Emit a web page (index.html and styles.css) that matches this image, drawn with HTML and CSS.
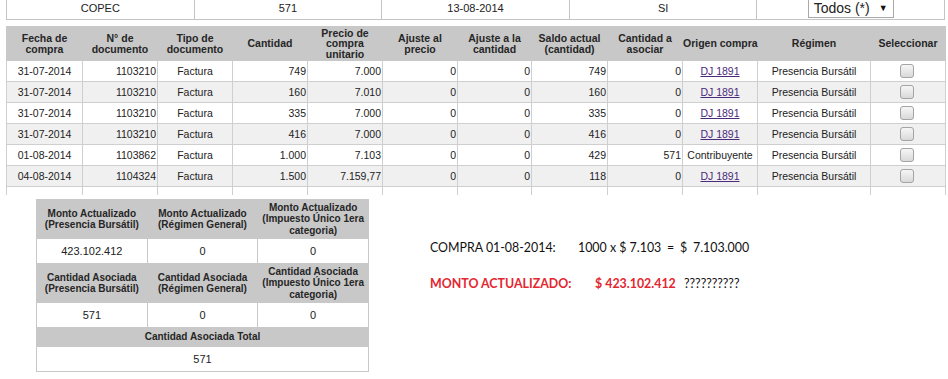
FILE: index.html
```html
<!DOCTYPE html>
<html lang="es">
<head>
<meta charset="utf-8">
<title>Compras</title>
<link rel="stylesheet" href="styles.css">
</head>
<body>
<div class="page">
  <table class="top">
    <tr>
      <td>COPEC</td>
      <td>571</td>
      <td>13-08-2014</td>
      <td>SI</td>
      <td><div class="sel"><span>Todos (*)</span><span class="arr">▼</span></div></td>
    </tr>
  </table>

  <table class="grid">
    <colgroup>
      <col class="c76"><col class="c75"><col class="c75"><col class="c75"><col class="c75"><col class="c75"><col class="c74"><col class="c76"><col class="c75"><col class="c75"><col class="c113"><col class="c75">
    </colgroup>
    <thead>
      <tr>
        <th>Fecha de<br>compra</th>
        <th>N° de<br>documento</th>
        <th>Tipo de<br>documento</th>
        <th>Cantidad</th>
        <th>Precio de<br>compra<br>unitario</th>
        <th>Ajuste al<br>precio</th>
        <th>Ajuste a la<br>cantidad</th>
        <th>Saldo actual<br>(cantidad)</th>
        <th>Cantidad a<br>asociar</th>
        <th class="nw">Origen compra</th>
        <th>Régimen</th>
        <th>Seleccionar</th>
      </tr>
    </thead>
    <tbody>
      <tr>
        <td class="c">31-07-2014</td><td class="r">1103210</td><td class="c">Factura</td><td class="r">749</td><td class="r">7.000</td><td class="r">0</td><td class="r">0</td><td class="r">749</td><td class="r">0</td><td class="c"><a class="lnk" href="#">DJ 1891</a></td><td class="c">Presencia Bursátil</td><td class="c"><span class="chk"></span></td>
      </tr>
      <tr class="alt">
        <td class="c">31-07-2014</td><td class="r">1103210</td><td class="c">Factura</td><td class="r">160</td><td class="r">7.010</td><td class="r">0</td><td class="r">0</td><td class="r">160</td><td class="r">0</td><td class="c"><a class="lnk" href="#">DJ 1891</a></td><td class="c">Presencia Bursátil</td><td class="c"><span class="chk"></span></td>
      </tr>
      <tr>
        <td class="c">31-07-2014</td><td class="r">1103210</td><td class="c">Factura</td><td class="r">335</td><td class="r">7.000</td><td class="r">0</td><td class="r">0</td><td class="r">335</td><td class="r">0</td><td class="c"><a class="lnk" href="#">DJ 1891</a></td><td class="c">Presencia Bursátil</td><td class="c"><span class="chk"></span></td>
      </tr>
      <tr class="alt">
        <td class="c">31-07-2014</td><td class="r">1103210</td><td class="c">Factura</td><td class="r">416</td><td class="r">7.000</td><td class="r">0</td><td class="r">0</td><td class="r">416</td><td class="r">0</td><td class="c"><a class="lnk" href="#">DJ 1891</a></td><td class="c">Presencia Bursátil</td><td class="c"><span class="chk"></span></td>
      </tr>
      <tr>
        <td class="c">01-08-2014</td><td class="r">1103862</td><td class="c">Factura</td><td class="r">1.000</td><td class="r">7.103</td><td class="r">0</td><td class="r">0</td><td class="r">429</td><td class="r">571</td><td class="c">Contribuyente</td><td class="c">Presencia Bursátil</td><td class="c"><span class="chk"></span></td>
      </tr>
      <tr class="alt">
        <td class="c">04-08-2014</td><td class="r">1104324</td><td class="c">Factura</td><td class="r">1.500</td><td class="r">7.159,77</td><td class="r">0</td><td class="r">0</td><td class="r">118</td><td class="r">0</td><td class="c"><a class="lnk" href="#">DJ 1891</a></td><td class="c">Presencia Bursátil</td><td class="c"><span class="chk"></span></td>
      </tr>
      <tr class="empty">
        <td></td><td></td><td></td><td></td><td></td><td></td><td></td><td></td><td></td><td></td><td></td><td></td>
      </tr>
    </tbody>
  </table>

  <div class="bottom">
    <table class="sum">
      <tr class="h3">
        <th>Monto Actualizado<br>(Presencia Bursátil)</th>
        <th>Monto Actualizado<br>(Régimen General)</th>
        <th>Monto Actualizado<br>(Impuesto Único 1era<br>categoria)</th>
      </tr>
      <tr class="v">
        <td>423.102.412</td><td>0</td><td>0</td>
      </tr>
      <tr class="h3">
        <th>Cantidad Asociada<br>(Presencia Bursátil)</th>
        <th>Cantidad Asociada<br>(Régimen General)</th>
        <th>Cantidad Asociada<br>(Impuesto Único 1era<br>categoria)</th>
      </tr>
      <tr class="v">
        <td>571</td><td>0</td><td>0</td>
      </tr>
      <tr class="h1">
        <th colspan="3">Cantidad Asociada Total</th>
      </tr>
      <tr class="v">
        <td colspan="3">571</td>
      </tr>
    </table>

    <div class="note">
      <div class="line">
        <span class="w1">COMPRA 01-08-2014:</span><span class="w2">1000 x $ 7.103</span><span class="w3">=</span><span class="w3">$</span><span>7.103.000</span>
      </div>
      <div class="line red">
        <span class="w4">MONTO ACTUALIZADO:</span><span class="w5">$ 423.102.412</span><span class="q">??????????</span>
      </div>
    </div>
  </div>
</div>
</body>
</html>
```

FILE: styles.css
```css
html, body {
  margin: 0;
  padding: 0;
  background: #ffffff;
}

body {
  font-family: "Liberation Sans", Arial, sans-serif;
  color: #222222;
  overflow: hidden;
}

.page {
  padding: 0 3px 0 6px;
}

/* top summary row */
.top {
  border-collapse: collapse;
  table-layout: fixed;
  width: 939px;
  margin-top: -4px;
}

.top td {
  border: 1px solid #c4c4c4;
  height: 22px;
  padding: 0;
  text-align: center;
  vertical-align: middle;
  font-size: 11px;
  color: #222;
}

.sel {
  display: inline-flex;
  align-items: center;
  gap: 9px;
  height: 19px;
  margin-top: -1px;
  padding: 0 5px 0 5px;
  border: 1px solid #a9a9a9;
  border-top-color: #c0c0c0;
  background: #fff;
  font-size: 14px;
  color: #222;
}

.sel .arr {
  font-size: 9px;
  color: #111;
}

/* main grid */
.grid {
  border-collapse: collapse;
  table-layout: fixed;
  width: 939px;
  margin-top: 6px;
}

.c74 { width: 74px; }
.c75 { width: 75px; }
.c76 { width: 76px; }
.c113 { width: 113px; }

.grid th {
  background: #c8c8c8;
  border: 1px solid #c8c8c8;
  height: 33px;
  padding: 0 2px;
  font-size: 10.5px;
  line-height: 10.5px;
  font-weight: bold;
  color: #262626;
  text-align: center;
  vertical-align: middle;
}

.grid th.nw {
  white-space: nowrap;
  padding: 0;
}

.grid td {
  border: 1px solid #cfcfcf;
  height: 20px;
  padding: 0 2px 0 2px;
  font-size: 10.5px;
  color: #222;
  vertical-align: middle;
  white-space: nowrap;
}

.grid td.r { text-align: right; padding-right: 1px; }
.grid td.c { text-align: center; }

.grid tr.alt td { background: #f0f0f0; }

.grid tr.empty td {
  height: 8px;
  border-bottom: none;
}

.lnk {
  color: #4a2a7a;
  text-decoration: underline;
}

.chk {
  display: inline-block;
  width: 12px;
  height: 12px;
  border: 1px solid #a4a4a4;
  border-radius: 3px;
  background: linear-gradient(#f6f6f6, #d9d9d9);
  vertical-align: middle;
  margin-top: -2px;
  margin-left: -3px;
}

/* bottom */
.bottom {
  display: flex;
  align-items: flex-start;
  margin-top: 4px;
}

.sum {
  border-collapse: collapse;
  table-layout: fixed;
  width: 333px;
  margin-left: 30px;
}

.sum th {
  background: #c8c8c8;
  border: 1px solid #c8c8c8;
  padding: 0 2px;
  font-size: 10px;
  line-height: 11.5px;
  font-weight: bold;
  color: #262626;
  text-align: center;
  vertical-align: middle;
}

.sum tr.h3 th { height: 38px; }
.sum tr.h1 th { height: 18px; }

.sum td {
  border: 1px solid #c8c8c8;
  height: 24px;
  padding: 0;
  font-size: 11px;
  color: #222;
  text-align: center;
  vertical-align: middle;
}

.note {
  margin-left: 61px;
  margin-top: 41px;
  font-family: Lato, "Open Sans", sans-serif;
  font-size: 12.4px;
  color: #111;
}

.line {
  display: flex;
  align-items: baseline;
  white-space: nowrap;
  height: 18px;
}

.line + .line {
  margin-top: 18px;
}

.w1 { width: 148px; }
.w2 { width: 89px; }
.w3 { width: 13px; }
.w4 { width: 165px; font-weight: bold; }
.w5 { width: 89px; font-weight: bold; }

.red { color: #e3262f; }
.red .q { color: #111; }
```
